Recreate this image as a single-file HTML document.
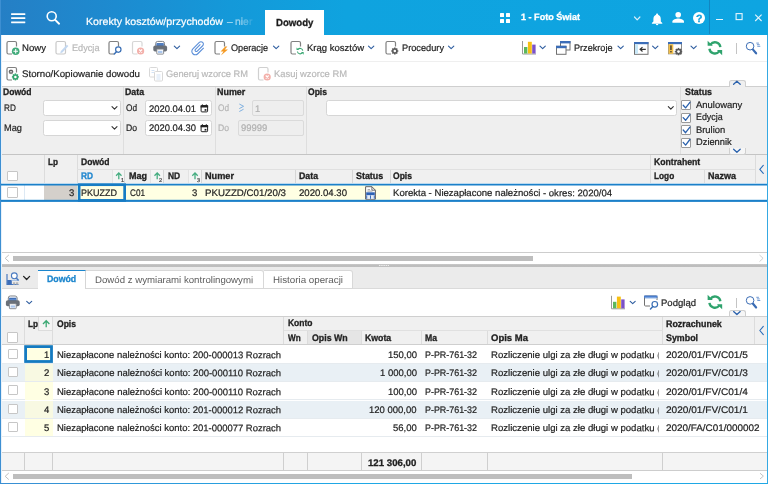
<!DOCTYPE html>
<html lang="pl">
<head>
<meta charset="utf-8">
<title>Dowody</title>
<style>
*{box-sizing:border-box;margin:0;padding:0}
html,body{width:768px;height:484px;overflow:hidden;background:#fff}
body{position:relative;font-family:"Liberation Sans",sans-serif;font-size:9.5px;line-height:12px;color:#222}
.a{position:absolute;white-space:nowrap;transform-origin:0 50%;-webkit-text-stroke:.2px}
.b{font-weight:bold;-webkit-text-stroke:.3px}
.box{position:absolute}
#root{position:absolute;left:0;top:0;width:768px;height:484px;will-change:transform}
#ov{position:absolute;left:0;top:0;width:768px;height:484px;pointer-events:none}
</style>
</head>
<body>
<div id="root">
<div class="box" style="left:0px;top:0px;width:768px;height:35px;background:linear-gradient(90deg,#257fc5 0%,#1d8bd0 15%,#1499d9 30%,#0fa3df 45%,#0ea5e1 100%);"></div>
<div class="a" style="top:15.83px;left:86.00px;font-size:10.3px;transform:rotate(.05deg) scaleX(1.032);color:#fff;">Korekty kosztów/przychodów</div>
<div class="a" style="top:15.83px;left:227.00px;font-size:10.3px;transform:rotate(.05deg) scaleX(1.000);color:rgba(255,255,255,.6);">–</div>
<div class="a" style="top:15.83px;left:235.00px;font-size:10.3px;transform:rotate(.05deg) scaleX(1.000);color:rgba(255,255,255,.5);">ni</div>
<div class="a" style="top:15.83px;left:242.80px;font-size:10.3px;transform:rotate(.05deg) scaleX(1.000);color:rgba(255,255,255,.3);">e</div>
<div class="a" style="top:15.83px;left:248.60px;font-size:10.3px;transform:rotate(.05deg) scaleX(1.000);color:rgba(255,255,255,.15);">r</div>
<div class="box" style="left:265px;top:10.3px;width:58.8px;height:25px;background:#fff;"></div>
<div class="a b" style="top:16.67px;left:276.20px;font-size:10.2px;transform:rotate(.05deg) scaleX(0.943);color:#1c1c1c;">Dowody</div>
<div class="box" style="left:500px;top:13.3px;width:4px;height:3.6px;background:#fff;border-radius:.5px"></div>
<div class="box" style="left:505.7px;top:13.3px;width:4px;height:3.6px;background:#fff;border-radius:.5px"></div>
<div class="box" style="left:500px;top:19px;width:4px;height:3.6px;background:#fff;border-radius:.5px"></div>
<div class="box" style="left:505.7px;top:19px;width:4px;height:3.6px;background:#fff;border-radius:.5px"></div>
<div class="a b" style="top:10.91px;left:521.00px;font-size:9.2px;transform:rotate(.05deg) scaleX(0.987);color:#fff;">1 - Foto Świat</div>
<div class="box" style="left:692.6px;top:11.7px;width:12px;height:12px;background:#fff;border-radius:50%"></div>
<div class="a b" style="top:11.76px;left:695.90px;font-size:10.5px;transform:rotate(.05deg) scaleX(1.000);color:#11a0dd;">?</div>
<div class="box" style="left:709px;top:0px;width:1px;height:34px;background:rgba(20,110,170,.55);"></div>
<div class="box" style="left:715.8px;top:18.8px;width:6.8px;height:1.2px;background:#e6f4fc;"></div>
<div class="box" style="left:2px;top:61px;width:766px;height:1px;background:#efefef;"></div>
<div class="a" style="top:41.51px;left:22.00px;transform:rotate(.05deg) scaleX(1.010);">Nowy</div>
<div class="a" style="top:41.51px;left:71.50px;transform:rotate(.05deg) scaleX(0.964);color:#b9b9b9;">Edycja</div>
<div class="a" style="top:41.51px;left:231.00px;transform:rotate(.05deg) scaleX(0.960);">Operacje</div>
<div class="a" style="top:41.51px;left:306.50px;transform:rotate(.05deg) scaleX(1.000);">Krąg kosztów</div>
<div class="a" style="top:41.51px;left:402.00px;transform:rotate(.05deg) scaleX(0.970);">Procedury</div>
<div class="a" style="top:41.51px;left:573.50px;transform:rotate(.05deg) scaleX(0.960);">Przekroje</div>
<div class="box" style="left:736px;top:43px;width:1px;height:10.5px;background:#c4c4c4;"></div>
<div class="a" style="top:68.21px;left:22.00px;transform:rotate(.05deg) scaleX(1.020);">Storno/Kopiowanie dowodu</div>
<div class="a" style="top:68.21px;left:166.00px;transform:rotate(.05deg) scaleX(0.977);color:#b9b9b9;">Generuj wzorce RM</div>
<div class="a" style="top:68.21px;left:274.00px;transform:rotate(.05deg) scaleX(0.988);color:#b9b9b9;">Kasuj wzorce RM</div>
<div class="box" style="left:2px;top:86px;width:766px;height:69px;background:#efefef;border-top:1px solid #cfcfcf;border-bottom:1px solid #c4c4c4"></div>
<div class="box" style="left:728.5px;top:79.8px;width:17px;height:7px;background:#efefef;border:1px solid #cfcfcf;border-bottom:none;border-radius:2.5px 2.5px 0 0"></div>
<div class="box" style="left:122.5px;top:87px;width:1px;height:67px;background:#dedede;"></div>
<div class="box" style="left:214.5px;top:87px;width:1px;height:67px;background:#dedede;"></div>
<div class="box" style="left:306px;top:87px;width:1px;height:67px;background:#dedede;"></div>
<div class="box" style="left:679.5px;top:87px;width:1px;height:67px;background:#dedede;"></div>
<div class="a b" style="top:86.21px;left:2.50px;transform:rotate(.05deg) scaleX(0.900);">Dowód</div>
<div class="a b" style="top:86.21px;left:124.50px;transform:rotate(.05deg) scaleX(0.923);">Data</div>
<div class="a b" style="top:86.21px;left:216.50px;transform:rotate(.05deg) scaleX(0.940);">Numer</div>
<div class="a b" style="top:86.21px;left:308.00px;transform:rotate(.05deg) scaleX(0.900);">Opis</div>
<div class="a b" style="top:86.21px;left:684.60px;transform:rotate(.05deg) scaleX(0.930);">Status</div>
<div class="a" style="top:102.41px;left:4.00px;transform:rotate(.05deg) scaleX(0.860);">RD</div>
<div class="a" style="top:122.21px;left:4.00px;transform:rotate(.05deg) scaleX(0.974);">Mag</div>
<div class="box" style="left:43px;top:100px;width:78px;height:15.5px;background:#fff;border:1px solid #d6d6d6;border-radius:2.5px"></div>
<div class="box" style="left:43px;top:120px;width:78px;height:15.5px;background:#fff;border:1px solid #d6d6d6;border-radius:2.5px"></div>
<div class="a" style="top:101.91px;left:126.00px;transform:rotate(.05deg) scaleX(0.868);">Od</div>
<div class="a" style="top:121.91px;left:126.00px;transform:rotate(.05deg) scaleX(0.906);">Do</div>
<div class="box" style="left:145px;top:100px;width:67px;height:15.5px;background:#fff;border:1px solid #d6d6d6;border-radius:2.5px"></div>
<div class="box" style="left:145px;top:120px;width:67px;height:15.5px;background:#fff;border:1px solid #d6d6d6;border-radius:2.5px"></div>
<div class="a" style="top:102.71px;left:148.80px;transform:rotate(.05deg) scaleX(0.989);">2020.04.01</div>
<div class="a" style="top:122.01px;left:148.80px;transform:rotate(.05deg) scaleX(0.989);">2020.04.30</div>
<div class="a" style="top:101.91px;left:218.00px;transform:rotate(.05deg) scaleX(0.868);color:#b5b5b5;">Od</div>
<div class="a" style="top:121.91px;left:218.00px;transform:rotate(.05deg) scaleX(0.906);color:#b5b5b5;">Do</div>
<div class="box" style="left:251.5px;top:100px;width:52px;height:15.5px;background:#eeeeee;border:1px solid #dadada;border-radius:2px"></div>
<div class="box" style="left:237.5px;top:120px;width:66px;height:15.5px;background:#eeeeee;border:1px solid #dadada;border-radius:2px"></div>
<div class="a" style="top:102.71px;left:255.00px;transform:rotate(.05deg) scaleX(1.000);color:#b0b0b0;">1</div>
<div class="a" style="top:122.01px;left:240.50px;transform:rotate(.05deg) scaleX(0.996);color:#b0b0b0;">99999</div>
<div class="box" style="left:325.5px;top:100px;width:351px;height:15.5px;background:#fff;border:1px solid #d6d6d6;border-radius:2.5px"></div>
<div class="box" style="left:681.4px;top:100.4px;width:10px;height:10px;background:#fff;border:1px solid #9a9a9a;border-radius:1px"></div>
<div class="a" style="top:98.91px;left:695.80px;transform:rotate(.05deg) scaleX(0.994);">Anulowany</div>
<div class="box" style="left:681.4px;top:112.80000000000001px;width:10px;height:10px;background:#fff;border:1px solid #9a9a9a;border-radius:1px"></div>
<div class="a" style="top:111.36px;left:695.80px;transform:rotate(.05deg) scaleX(0.936);">Edycja</div>
<div class="box" style="left:681.4px;top:125.2px;width:10px;height:10px;background:#fff;border:1px solid #9a9a9a;border-radius:1px"></div>
<div class="a" style="top:123.81px;left:695.80px;transform:rotate(.05deg) scaleX(0.987);">Brulion</div>
<div class="box" style="left:681.4px;top:137.6px;width:10px;height:10px;background:#fff;border:1px solid #9a9a9a;border-radius:1px"></div>
<div class="a" style="top:136.26px;left:695.80px;transform:rotate(.05deg) scaleX(0.980);">Dziennik</div>
<div class="box" style="left:728.5px;top:147.5px;width:17px;height:7px;background:#f6f6f6;border:1px solid #cfcfcf;border-top:none;border-radius:0 0 2.5px 2.5px"></div>
<div class="box" style="left:2px;top:155px;width:766px;height:28px;background:#f0f0f0;"></div>
<div class="box" style="left:2px;top:182.5px;width:766px;height:1px;background:#cfcfcf;"></div>
<div class="box" style="left:43.5px;top:155px;width:1px;height:28px;background:#dcdcdc;"></div>
<div class="box" style="left:77px;top:155px;width:1px;height:28px;background:#dcdcdc;"></div>
<div class="box" style="left:649.5px;top:155px;width:1px;height:28px;background:#dcdcdc;"></div>
<div class="box" style="left:754.5px;top:155px;width:1px;height:28px;background:#dcdcdc;"></div>
<div class="box" style="left:111.5px;top:170px;width:13px;height:13px;background:#f4f4f4;border-left:1px solid #e3e3e3"></div>
<div class="box" style="left:150px;top:170px;width:13px;height:13px;background:#f4f4f4;border-left:1px solid #e3e3e3"></div>
<div class="box" style="left:187.5px;top:170px;width:13.5px;height:13px;background:#f4f4f4;border-left:1px solid #e3e3e3"></div>
<div class="box" style="left:124.3px;top:170px;width:1px;height:13px;background:#d6d6d6;"></div>
<div class="box" style="left:163px;top:170px;width:1px;height:13px;background:#d6d6d6;"></div>
<div class="box" style="left:201px;top:170px;width:1px;height:13px;background:#d6d6d6;"></div>
<div class="box" style="left:295px;top:170px;width:1px;height:13px;background:#d6d6d6;"></div>
<div class="box" style="left:352px;top:170px;width:1px;height:13px;background:#d6d6d6;"></div>
<div class="box" style="left:389.5px;top:170px;width:1px;height:13px;background:#d6d6d6;"></div>
<div class="box" style="left:704px;top:170px;width:1px;height:13px;background:#dcdcdc;"></div>
<div class="box" style="left:77px;top:169px;width:572.5px;height:1px;background:#e0e0e0;"></div>
<div class="box" style="left:649.5px;top:169px;width:105.0px;height:1px;background:#e0e0e0;"></div>
<div class="a b" style="top:155.71px;left:48.00px;transform:rotate(.05deg) scaleX(0.860);">Lp</div>
<div class="a b" style="top:155.71px;left:81.00px;transform:rotate(.05deg) scaleX(0.900);">Dowód</div>
<div class="a b" style="top:155.71px;left:653.80px;transform:rotate(.05deg) scaleX(0.912);">Kontrahent</div>
<div class="a b" style="top:169.81px;left:81.00px;transform:rotate(.05deg) scaleX(0.875);color:#1f86cf;">RD</div>
<div class="a b" style="top:169.81px;left:129.00px;transform:rotate(.05deg) scaleX(0.947);">Mag</div>
<div class="a b" style="top:169.81px;left:167.80px;transform:rotate(.05deg) scaleX(0.889);">ND</div>
<div class="a b" style="top:169.81px;left:205.00px;transform:rotate(.05deg) scaleX(0.964);">Numer</div>
<div class="a b" style="top:169.81px;left:299.00px;transform:rotate(.05deg) scaleX(0.923);">Data</div>
<div class="a b" style="top:169.81px;left:355.80px;transform:rotate(.05deg) scaleX(0.937);">Status</div>
<div class="a b" style="top:169.81px;left:393.00px;transform:rotate(.05deg) scaleX(0.900);">Opis</div>
<div class="a b" style="top:169.81px;left:653.80px;transform:rotate(.05deg) scaleX(0.870);">Logo</div>
<div class="a b" style="top:169.81px;left:708.00px;transform:rotate(.05deg) scaleX(0.947);">Nazwa</div>
<div class="a" style="top:173.59px;left:120.80px;font-size:5.5px;transform:rotate(.05deg) scaleX(1.000);color:#444;">1</div>
<div class="a" style="top:173.59px;left:159.20px;font-size:5.5px;transform:rotate(.05deg) scaleX(1.000);color:#444;">2</div>
<div class="a" style="top:173.59px;left:197.00px;font-size:5.5px;transform:rotate(.05deg) scaleX(1.000);color:#444;">3</div>
<div class="box" style="left:7.2px;top:170.5px;width:10.4px;height:10.4px;background:#fff;border:1px solid #c6c6c6;border-radius:1px"></div>
<div class="box" style="left:2px;top:183px;width:766px;height:18px;background:#fff;"></div>
<div class="box" style="left:44px;top:185px;width:33px;height:15px;background:#d4d0cb;"></div>
<div class="box" style="left:77px;top:185px;width:312.5px;height:15px;background:#ffffe3;"></div>
<div class="box" style="left:24px;top:185px;width:1px;height:15px;background:#dde9f4;"></div>
<div class="box" style="left:7.3px;top:187.2px;width:10.4px;height:10.4px;background:#fff;border:1px solid #c6c6c6;border-radius:1px"></div>
<div class="a" style="top:186.51px;right:694.00px;transform-origin:100% 50%;transform:rotate(.05deg) scaleX(1.000);">3</div>
<div class="a" style="top:186.51px;left:81.00px;transform:rotate(.05deg) scaleX(0.947);">PKUZZD</div>
<div class="a" style="top:186.51px;left:130.00px;transform:rotate(.05deg) scaleX(0.861);">C01</div>
<div class="a" style="top:186.51px;right:570.50px;transform-origin:100% 50%;transform:rotate(.05deg) scaleX(1.000);">3</div>
<div class="a" style="top:186.51px;left:205.00px;transform:rotate(.05deg) scaleX(1.023);">PKUZZD/C01/20/3</div>
<div class="a" style="top:186.51px;left:299.00px;transform:rotate(.05deg) scaleX(1.010);">2020.04.30</div>
<div class="a" style="top:186.51px;left:393.00px;transform:rotate(.05deg) scaleX(1.007);">Korekta - Niezapłacone należności - okres: 2020/04</div>
<div class="box" style="left:2px;top:252px;width:766px;height:1px;background:#cdcdcd;"></div>
<div class="box" style="left:13px;top:256px;width:519.5px;height:5px;background:#bebebe;"></div>
<div class="box" style="left:2px;top:264px;width:766px;height:3px;background:linear-gradient(180deg,#c9c9c9,#b9b9b9 70%,#c4c4c4);"></div>
<div class="box" style="left:2px;top:267px;width:766px;height:22px;background:#ebebeb;border-bottom:1px solid #dadada"></div>
<div class="box" style="left:37.5px;top:269.5px;width:48.5px;height:19.5px;background:#fff;border-top:1.800px solid #1c86cd;border-right:1px solid #d6d6d6"></div>
<div class="a b" style="top:272.81px;left:46.80px;transform:rotate(.05deg) scaleX(0.922);color:#1c86cd;">Dowód</div>
<div class="box" style="left:86px;top:270px;width:178px;height:19px;background:#fff;border:1px solid #d8d8d8;border-left:none;border-radius:0 3px 0 0"></div>
<div class="box" style="left:264px;top:270px;width:89px;height:19px;background:#fff;border:1px solid #d8d8d8;border-left:none;border-radius:0 3px 0 0"></div>
<div class="a" style="top:273.61px;left:95.00px;transform:rotate(.05deg) scaleX(1.015);color:#5c5c5c;-webkit-text-stroke:0;">Dowód z wymiarami kontrolingowymi</div>
<div class="a" style="top:273.61px;left:273.30px;transform:rotate(.05deg) scaleX(1.028);color:#5c5c5c;-webkit-text-stroke:0;">Historia operacji</div>
<div class="a" style="top:296.71px;left:661.30px;transform:rotate(.05deg) scaleX(1.004);">Podgląd</div>
<div class="box" style="left:736px;top:298px;width:1px;height:9.5px;background:#c4c4c4;"></div>
<div class="box" style="left:728.5px;top:309.7px;width:17px;height:7px;background:#f6f6f6;border:1px solid #cfcfcf;border-bottom:none;border-radius:2.5px 2.5px 0 0"></div>
<div class="box" style="left:2px;top:316px;width:766px;height:28.5px;background:#f0f0f0;border-top:1px solid #cfcfcf;border-bottom:1px solid #cfcfcf"></div>
<div class="box" style="left:307.5px;top:331px;width:54px;height:13px;background:#e5e5e5;"></div>
<div class="box" style="left:23.5px;top:317px;width:1px;height:27px;background:#dcdcdc;"></div>
<div class="box" style="left:52px;top:317px;width:1px;height:27px;background:#dcdcdc;"></div>
<div class="box" style="left:283px;top:317px;width:1px;height:27px;background:#dcdcdc;"></div>
<div class="box" style="left:662px;top:317px;width:1px;height:27px;background:#dcdcdc;"></div>
<div class="box" style="left:754px;top:317px;width:1px;height:27px;background:#dcdcdc;"></div>
<div class="box" style="left:306.5px;top:331px;width:1px;height:13px;background:#dcdcdc;"></div>
<div class="box" style="left:361px;top:331px;width:1px;height:13px;background:#dcdcdc;"></div>
<div class="box" style="left:420.5px;top:331px;width:1px;height:13px;background:#dcdcdc;"></div>
<div class="box" style="left:486.5px;top:331px;width:1px;height:13px;background:#dcdcdc;"></div>
<div class="box" style="left:283.5px;top:330.3px;width:379.0px;height:1px;background:#e0e0e0;"></div>
<div class="box" style="left:38px;top:317px;width:14.5px;height:13.5px;background:#f4f4f4;border:1px solid #dcdcdc;border-top:none"></div>
<div class="a b" style="top:317.71px;left:28.00px;transform:rotate(.05deg) scaleX(0.862);">Lp</div>
<div class="a b" style="top:317.71px;left:57.00px;transform:rotate(.05deg) scaleX(0.900);">Opis</div>
<div class="a b" style="top:317.21px;left:287.50px;transform:rotate(.05deg) scaleX(0.893);">Konto</div>
<div class="a b" style="top:317.51px;left:666.00px;transform:rotate(.05deg) scaleX(0.935);">Rozrachunek</div>
<div class="a b" style="top:331.71px;left:287.50px;transform:rotate(.05deg) scaleX(0.860);">Wn</div>
<div class="a b" style="top:331.71px;left:311.80px;transform:rotate(.05deg) scaleX(0.927);">Opis Wn</div>
<div class="a b" style="top:331.71px;left:365.30px;transform:rotate(.05deg) scaleX(0.919);">Kwota</div>
<div class="a b" style="top:331.71px;left:425.00px;transform:rotate(.05deg) scaleX(0.909);">Ma</div>
<div class="a b" style="top:331.71px;left:491.00px;transform:rotate(.05deg) scaleX(1.001);">Opis Ma</div>
<div class="a b" style="top:331.71px;left:666.00px;transform:rotate(.05deg) scaleX(0.933);">Symbol</div>
<div class="box" style="left:7.2px;top:332.2px;width:10.4px;height:10.4px;background:#fff;border:1px solid #c6c6c6;border-radius:1px"></div>
<div class="box" style="left:2px;top:345.3px;width:766px;height:18.4px;background:#fff;border-bottom:1px solid #e6ebef"></div>
<div class="box" style="left:24.5px;top:345.3px;width:28px;height:17.599999999999998px;background:#ffffe3;"></div>
<div class="box" style="left:7.7px;top:348.5px;width:10.2px;height:10.2px;background:#fff;border:1px solid #c6c6c6;border-radius:1px"></div>
<div class="a" style="top:348.81px;right:719.00px;transform-origin:100% 50%;transform:rotate(.05deg) scaleX(1.000);">1</div>
<div class="a" style="top:348.81px;left:57.00px;transform:rotate(.05deg) scaleX(0.996);width:227.0px;overflow:hidden;">Niezapłacone należności konto: 200-000013 Rozrach</div>
<div class="a" style="top:348.81px;right:351.20px;transform-origin:100% 50%;transform:rotate(.05deg) scaleX(1.000);">150,00</div>
<div class="a" style="top:348.81px;left:425.00px;transform:rotate(.05deg) scaleX(0.938);">P-PR-761-32</div>
<div class="a" style="top:348.81px;left:491.00px;transform:rotate(.05deg) scaleX(1.009);width:166.4px;overflow:hidden;">Rozliczenie ulgi za złe długi w podatku (</div>
<div class="a" style="top:348.81px;left:665.50px;transform:rotate(.05deg) scaleX(1.061);">2020/01/FV/C01/5</div>
<div class="box" style="left:2px;top:363.7px;width:766px;height:18.4px;background:#e9f0f5;border-bottom:1px solid #e6ebef"></div>
<div class="box" style="left:24.5px;top:363.7px;width:28px;height:17.599999999999998px;background:#f8f9e2;"></div>
<div class="box" style="left:7.7px;top:366.9px;width:10.2px;height:10.2px;background:#fff;border:1px solid #c6c6c6;border-radius:1px"></div>
<div class="a" style="top:367.21px;right:719.00px;transform-origin:100% 50%;transform:rotate(.05deg) scaleX(1.000);">2</div>
<div class="a" style="top:367.21px;left:57.00px;transform:rotate(.05deg) scaleX(0.999);width:226.3px;overflow:hidden;">Niezapłacone należności konto: 200-000110 Rozrach</div>
<div class="a" style="top:367.21px;right:351.20px;transform-origin:100% 50%;transform:rotate(.05deg) scaleX(1.000);">1 000,00</div>
<div class="a" style="top:367.21px;left:425.00px;transform:rotate(.05deg) scaleX(0.938);">P-PR-761-32</div>
<div class="a" style="top:367.21px;left:491.00px;transform:rotate(.05deg) scaleX(1.009);width:166.4px;overflow:hidden;">Rozliczenie ulgi za złe długi w podatku (</div>
<div class="a" style="top:367.21px;left:665.50px;transform:rotate(.05deg) scaleX(1.061);">2020/01/FV/C01/3</div>
<div class="box" style="left:2px;top:382.1px;width:766px;height:18.4px;background:#fff;border-bottom:1px solid #e6ebef"></div>
<div class="box" style="left:24.5px;top:382.1px;width:28px;height:17.599999999999998px;background:#ffffe3;"></div>
<div class="box" style="left:7.7px;top:385.3px;width:10.2px;height:10.2px;background:#fff;border:1px solid #c6c6c6;border-radius:1px"></div>
<div class="a" style="top:385.61px;right:719.00px;transform-origin:100% 50%;transform:rotate(.05deg) scaleX(1.000);">3</div>
<div class="a" style="top:385.61px;left:57.00px;transform:rotate(.05deg) scaleX(0.999);width:226.3px;overflow:hidden;">Niezapłacone należności konto: 200-000110 Rozrach</div>
<div class="a" style="top:385.61px;right:351.20px;transform-origin:100% 50%;transform:rotate(.05deg) scaleX(1.000);">100,00</div>
<div class="a" style="top:385.61px;left:425.00px;transform:rotate(.05deg) scaleX(0.938);">P-PR-761-32</div>
<div class="a" style="top:385.61px;left:491.00px;transform:rotate(.05deg) scaleX(1.009);width:166.4px;overflow:hidden;">Rozliczenie ulgi za złe długi w podatku (</div>
<div class="a" style="top:385.61px;left:665.50px;transform:rotate(.05deg) scaleX(1.061);">2020/01/FV/C01/4</div>
<div class="box" style="left:2px;top:400.5px;width:766px;height:18.4px;background:#e9f0f5;border-bottom:1px solid #e6ebef"></div>
<div class="box" style="left:24.5px;top:400.5px;width:28px;height:17.599999999999998px;background:#f8f9e2;"></div>
<div class="box" style="left:7.7px;top:403.7px;width:10.2px;height:10.2px;background:#fff;border:1px solid #c6c6c6;border-radius:1px"></div>
<div class="a" style="top:404.01px;right:719.00px;transform-origin:100% 50%;transform:rotate(.05deg) scaleX(1.000);">4</div>
<div class="a" style="top:404.01px;left:57.00px;transform:rotate(.05deg) scaleX(0.996);width:227.0px;overflow:hidden;">Niezapłacone należności konto: 201-000012 Rozrach</div>
<div class="a" style="top:404.01px;right:351.20px;transform-origin:100% 50%;transform:rotate(.05deg) scaleX(1.000);">120 000,00</div>
<div class="a" style="top:404.01px;left:425.00px;transform:rotate(.05deg) scaleX(0.938);">P-PR-761-32</div>
<div class="a" style="top:404.01px;left:491.00px;transform:rotate(.05deg) scaleX(1.009);width:166.4px;overflow:hidden;">Rozliczenie ulgi za złe długi w podatku (</div>
<div class="a" style="top:404.01px;left:665.50px;transform:rotate(.05deg) scaleX(1.061);">2020/01/FV/C01/1</div>
<div class="box" style="left:2px;top:418.9px;width:766px;height:18.4px;background:#fff;border-bottom:1px solid #e6ebef"></div>
<div class="box" style="left:24.5px;top:418.9px;width:28px;height:17.599999999999998px;background:#ffffe3;"></div>
<div class="box" style="left:7.7px;top:422.1px;width:10.2px;height:10.2px;background:#fff;border:1px solid #c6c6c6;border-radius:1px"></div>
<div class="a" style="top:422.41px;right:719.00px;transform-origin:100% 50%;transform:rotate(.05deg) scaleX(1.000);">5</div>
<div class="a" style="top:422.41px;left:57.00px;transform:rotate(.05deg) scaleX(0.996);width:227.0px;overflow:hidden;">Niezapłacone należności konto: 201-000077 Rozrach</div>
<div class="a" style="top:422.41px;right:351.20px;transform-origin:100% 50%;transform:rotate(.05deg) scaleX(1.000);">56,00</div>
<div class="a" style="top:422.41px;left:425.00px;transform:rotate(.05deg) scaleX(0.938);">P-PR-761-32</div>
<div class="a" style="top:422.41px;left:491.00px;transform:rotate(.05deg) scaleX(1.009);width:166.4px;overflow:hidden;">Rozliczenie ulgi za złe długi w podatku (</div>
<div class="a" style="top:422.41px;left:665.50px;transform:rotate(.05deg) scaleX(1.041);">2020/FA/C01/000002</div>
<div class="box" style="left:2px;top:452px;width:766px;height:19px;background:#f4f4f4;border-top:1px solid #d0d0d0;border-bottom:1px solid #cdcdcd"></div>
<div class="box" style="left:23.5px;top:453px;width:1px;height:17px;background:#cfcfcf;"></div>
<div class="box" style="left:52px;top:453px;width:1px;height:17px;background:#cfcfcf;"></div>
<div class="box" style="left:283px;top:453px;width:1px;height:17px;background:#cfcfcf;"></div>
<div class="box" style="left:307px;top:453px;width:1px;height:17px;background:#cfcfcf;"></div>
<div class="box" style="left:361px;top:453px;width:1px;height:17px;background:#cfcfcf;"></div>
<div class="box" style="left:420.5px;top:453px;width:1px;height:17px;background:#cfcfcf;"></div>
<div class="box" style="left:486.5px;top:453px;width:1px;height:17px;background:#cfcfcf;"></div>
<div class="box" style="left:662px;top:453px;width:1px;height:17px;background:#cfcfcf;"></div>
<div class="a b" style="top:456.51px;left:367.50px;transform:rotate(.05deg) scaleX(1.016);">121 306,00</div>
<div class="box" style="left:13px;top:474px;width:619px;height:5.4px;background:#bebebe;"></div>
<div class="box" style="left:0px;top:0px;width:1px;height:484px;background:#3d8fd2;"></div>
<div class="box" style="left:1px;top:35px;width:1px;height:449px;background:rgba(61,143,210,.12);"></div>
<div class="box" style="left:767px;top:35px;width:1px;height:449px;background:#35a9e3;"></div>
<div class="box" style="left:0px;top:482.6px;width:768px;height:1.4px;background:linear-gradient(90deg,#3a8fd3,#1fa8e5 45%);"></div>
<svg id="ov" width="768" height="484" viewBox="0 0 768 484">
<rect x="11.1" y="13.2" width="14.2" height="1.750" rx=".3" fill="#fff"/>
<rect x="11.1" y="17.3" width="14.2" height="1.750" rx=".3" fill="#fff"/>
<rect x="11.1" y="21.4" width="14.2" height="1.750" rx=".3" fill="#fff"/>
<g fill="none" stroke="#fff"><circle cx="51.7" cy="16.3" r="4.500" stroke-width="1.600"/><path d="M55.200,19.900 L59.100,23.700" stroke-width="1.900" stroke-linecap="round"/></g>
<path d="M634.5,17 l2.7,2.8 l2.7,-2.8" fill="none" stroke="#d8eefa" stroke-width="1.2" stroke-linecap="round" stroke-linejoin="round"/>
<g fill="#fff"><path d="M657.1,13.4 c0.6,0 1,0.4 1,1 v0.4 c1.7,0.6 2.7,2.2 2.7,4.2 v2.6 l1.5,1.5 v0.6 h-10.4 v-0.6 l1.5,-1.5 v-2.6 c0,-2 1,-3.600 2.7,-4.2 v-0.4 c0,-0.6 0.4,-1 1,-1 z"/><path d="M655.9,24.1 h2.4 a1.2,1.2 0 0 1 -2.4,0 z"/></g>
<g fill="#fff"><circle cx="678.2" cy="14.7" r="2.8"/><path d="M672.4,22.8 v-1.4 c0,-2 3.8,-3 5.800,-3 s5.800,1 5.800,3 v1.400 z"/></g>
<rect x="736.1" y="13.600" width="6" height="6" fill="none" stroke="#e6f4fc" stroke-width="1.1"/>
<path d="M755.200,14.6 l6.4,6.4 m0,-6.4 l-6.4,6.4" stroke="#e6f4fc" stroke-width="1.1" fill="none"/>
<path d="M12.00,54 H8.5 a1.5,1.5 0 0 1 -1.5,-1.5 V43.0 a1.5,1.5 0 0 1 1.5,-1.5 H15.0 a1.5,1.5 0 0 1 1.5,1.5 V46.50" fill="none" stroke="#808080" stroke-width="1.2" opacity="1"/>
<circle cx="15.7" cy="51.2" r="3.800" fill="#42ab7b"/><path d="M13.400,51.2 h4.600 M15.7,48.900 v4.600" stroke="#fff" stroke-width="1.1"/>
<path d="M57.5,54 a1.5,1.5 0 0 1 -1.5,-1.5 V43.0 a1.5,1.5 0 0 1 1.5,-1.5 H64.0 a1.5,1.5 0 0 1 1.5,1.5 V52.5 a1.5,1.5 0 0 1 -1.5,1.5 Z" fill="none" stroke="#c9c9c9" stroke-width="1.2" opacity="1"/>
<path d="M60.200,53.300 l0.700,-2.300 l6,-6.300 l1.500,1.400 l-6,6.300 z" fill="#c3d8f1"/>
<path d="M114.00,54 H110.5 a1.5,1.5 0 0 1 -1.5,-1.5 V43.0 a1.5,1.5 0 0 1 1.5,-1.5 H117.0 a1.5,1.5 0 0 1 1.5,1.5 V46.50" fill="none" stroke="#808080" stroke-width="1.2" opacity="1"/>
<g fill="none" stroke="#3a6fb5"><circle cx="118.300" cy="49.6" r="2.700" stroke-width="1.2" fill="#fff"/><path d="M116.4,51.800 L114.300,54" stroke-width="1.5" stroke-linecap="round"/></g>
<path d="M137.50,54 H134.0 a1.5,1.5 0 0 1 -1.5,-1.5 V43.0 a1.5,1.5 0 0 1 1.5,-1.5 H140.5 a1.5,1.5 0 0 1 1.5,1.5 V46.50" fill="none" stroke="#d6d6d6" stroke-width="1.2" opacity="1"/>
<circle cx="140.6" cy="51" r="3.6" fill="#f3b0aa"/><path d="M139.100,49.500 l3,3 m0,-3 l-3,3" stroke="#fff" stroke-width="1.1"/>
<g transform="translate(153,40.8)"><rect x="2.700" y="0.600" width="8.800" height="6" rx="2" fill="#fff" stroke="#7b8088" stroke-width="1"/><rect x="3.500" y="2.300" width="7.200" height="3.700" fill="#3f6fb7"/><rect x="3.500" y="3.600" width="7.200" height="0.900" fill="#5d8bd0"/><rect x="0.300" y="4.800" width="13.800" height="6" rx="1.800" fill="#6a7078"/><rect x="3.800" y="8.300" width="6.800" height="5" rx="0.600" fill="#fff" stroke="#7b8088" stroke-width="0.900"/><rect x="5" y="10" width="4.400" height="2.200" fill="#a9c6ee"/></g>
<path d="M174.3,46.2 l2.65,2.5 l2.65,-2.5" fill="none" stroke="#2f5ea0" stroke-width="1.15" stroke-linecap="round" stroke-linejoin="round"/>
<path transform="translate(197.9,48.2) rotate(45) scale(.73) translate(-12,-12)" fill="#5a8ed8" d="M16.5 6v11.5c0 2.210-1.790 4-4 4s-4-1.790-4-4V5c0-1.380 1.120-2.500 2.500-2.500s2.500 1.120 2.500 2.500v10.500c0 .55-.45 1-1 1s-1-.45-1-1V6H10v9.500c0 1.380 1.120 2.500 2.500 2.500s2.500-1.120 2.500-2.500V5c0-2.210-1.790-4-4-4S7 2.790 7 5v12.500c0 3.040 2.460 5.500 5.500 5.500s5.500-2.460 5.500-5.500V6h-1.500z"/>
<path d="M220.00,54 H216.5 a1.5,1.5 0 0 1 -1.5,-1.5 V43.0 a1.5,1.5 0 0 1 1.5,-1.5 H223.0 a1.5,1.5 0 0 1 1.5,1.5 V46.50" fill="none" stroke="#808080" stroke-width="1.2" opacity="1"/>
<path d="M225.300,46.400 l-4.700,5 h2.900 l-2.600,4.100 l7.100,-6.100 h-3.200 l2.600,-3 z" fill="#f59a23"/>
<path d="M273.5,46.2 l2.65,2.5 l2.65,-2.5" fill="none" stroke="#2f5ea0" stroke-width="1.15" stroke-linecap="round" stroke-linejoin="round"/>
<path d="M296.00,54 H292.5 a1.5,1.5 0 0 1 -1.5,-1.5 V43.0 a1.5,1.5 0 0 1 1.5,-1.5 H299.0 a1.5,1.5 0 0 1 1.5,1.5 V46.50" fill="none" stroke="#808080" stroke-width="1.2" opacity="1"/>
<g transform="translate(300.1,51.1) scale(0.509)"><path d="M5.3,-0.8 A5.3,5.3 0 0 0 -4.3,-3.100 M-5.3,0.8 A5.3,5.3 0 0 0 4.3,3.100" fill="none" stroke="#3aa873" stroke-width="2.16"/><path d="M-7,-7 V-2 H-2 Z M7,7 V2 H2 Z" fill="#3aa873"/></g>
<path d="M368.5,46.2 l2.65,2.5 l2.65,-2.5" fill="none" stroke="#2f5ea0" stroke-width="1.15" stroke-linecap="round" stroke-linejoin="round"/>
<path d="M391.00,54 H387.5 a1.5,1.5 0 0 1 -1.5,-1.5 V43.0 a1.5,1.5 0 0 1 1.5,-1.5 H394.0 a1.5,1.5 0 0 1 1.5,1.5 V46.50" fill="none" stroke="#808080" stroke-width="1.2" opacity="1"/>
<g fill="#5a5a5a"><circle cx="394.8" cy="51" r="2.73"/>
<rect x="394.03" y="47.50" width="1.54" height="7.00" transform="rotate(0 394.8 51)"/>
<rect x="394.03" y="47.50" width="1.54" height="7.00" transform="rotate(45 394.8 51)"/>
<rect x="394.03" y="47.50" width="1.54" height="7.00" transform="rotate(90 394.8 51)"/>
<rect x="394.03" y="47.50" width="1.54" height="7.00" transform="rotate(135 394.8 51)"/>
<circle cx="394.8" cy="51" r="1.26" fill="#fff"/></g>
<path d="M448.5,46.2 l2.65,2.5 l2.65,-2.5" fill="none" stroke="#2f5ea0" stroke-width="1.15" stroke-linecap="round" stroke-linejoin="round"/>
<g transform="translate(522,41)"><path d="M0.5,0 V13 H14" fill="none" stroke="#9a9a9a" stroke-width="1"/><rect x="2" y="6" width="3.4" height="6.5" fill="#5cb85c"/><rect x="5.9" y="0.8" width="3.9" height="11.7" fill="#f7bf12"/><rect x="10.2" y="3.6" width="3.4" height="8.9" fill="#7b52c7"/></g>
<path d="M540,46.2 l2.65,2.5 l2.65,-2.5" fill="none" stroke="#2f5ea0" stroke-width="1.15" stroke-linecap="round" stroke-linejoin="round"/>
<g><rect x="560.5" y="41.500" width="9.5" height="8.5" fill="#fff" stroke="#707070"/><rect x="560" y="41" width="10.5" height="2.400" fill="#3b6db8"/><rect x="556.5" y="46.300" width="9.5" height="8" fill="#fff" stroke="#707070"/><rect x="556" y="45.800" width="10.500" height="2.400" fill="#3b6db8"/></g>
<path d="M618,46.2 l2.65,2.5 l2.65,-2.5" fill="none" stroke="#2f5ea0" stroke-width="1.15" stroke-linecap="round" stroke-linejoin="round"/>
<g><rect x="634.5" y="42.500" width="13.500" height="11.800" fill="#fff" stroke="#707070"/><rect x="634" y="42" width="14.500" height="2.200" fill="#3b6db8"/><rect x="635" y="44.200" width="3" height="9.600" fill="#c9e8f8"/><path d="M645.800,49.300 h-5.500 m2.200,-2.200 l-2.400,2.200 l2.400,2.200" fill="none" stroke="#333" stroke-width="1.2"/></g>
<path d="M652.6,46.2 l2.65,2.5 l2.65,-2.5" fill="none" stroke="#2f5ea0" stroke-width="1.15" stroke-linecap="round" stroke-linejoin="round"/>
<g><rect x="668.5" y="42.500" width="13.000" height="11.300" fill="#fff" stroke="#8a8a8a"/><rect x="668" y="42" width="14.000" height="2.200" fill="#3b6db8"/><rect x="668.500" y="44.200" width="4.800" height="9.600" fill="#f3c04a"/><rect x="670.300" y="45.400" width="1.300" height="4.600" fill="#333"/><rect x="670.300" y="51" width="1.300" height="1.400" fill="#333"/></g>
<g fill="#5a5a5a"><circle cx="678.5" cy="51.6" r="2.89"/>
<rect x="677.69" y="47.90" width="1.63" height="7.40" transform="rotate(0 678.5 51.6)"/>
<rect x="677.69" y="47.90" width="1.63" height="7.40" transform="rotate(45 678.5 51.6)"/>
<rect x="677.69" y="47.90" width="1.63" height="7.40" transform="rotate(90 678.5 51.6)"/>
<rect x="677.69" y="47.90" width="1.63" height="7.40" transform="rotate(135 678.5 51.6)"/>
<circle cx="678.5" cy="51.6" r="1.33" fill="#fff"/></g>
<path d="M691,46.2 l2.65,2.5 l2.65,-2.5" fill="none" stroke="#2f5ea0" stroke-width="1.15" stroke-linecap="round" stroke-linejoin="round"/>
<g transform="translate(714.9,47.9) scale(1.038)"><path d="M5.3,-0.8 A5.3,5.3 0 0 0 -4.3,-3.100 M-5.3,0.8 A5.3,5.3 0 0 0 4.3,3.100" fill="none" stroke="#2fa36d" stroke-width="2.22"/><path d="M-7,-7 V-2 H-2 Z M7,7 V2 H2 Z" fill="#2fa36d"/></g>
<g transform="translate(745.8,41.3)" fill="none" stroke="#3a6cb4"><circle cx="4.3" cy="4.9" r="3.800" stroke-width="1"/><path d="M7.200,8.300 L10.300,12" stroke-width="2.200" stroke-linecap="round"/><path d="M10.500,1.800 h2.600 M11.100,3.400 h2.800 M11.500,5 h3" stroke-width="0.9" stroke="#5f8ccc"/></g>
<path d="M12.00,80 H8.5 a1.5,1.5 0 0 1 -1.5,-1.5 V69.0 a1.5,1.5 0 0 1 1.5,-1.5 H15.0 a1.5,1.5 0 0 1 1.5,1.5 V72.50" fill="none" stroke="#808080" stroke-width="1.2" opacity="1"/>
<g fill="#5a5a5a"><circle cx="11" cy="71.8" r="1.79"/>
<rect x="10.49" y="69.50" width="1.01" height="4.60" transform="rotate(0 11 71.8)"/>
<rect x="10.49" y="69.50" width="1.01" height="4.60" transform="rotate(45 11 71.8)"/>
<rect x="10.49" y="69.50" width="1.01" height="4.60" transform="rotate(90 11 71.8)"/>
<rect x="10.49" y="69.50" width="1.01" height="4.60" transform="rotate(135 11 71.8)"/>
<circle cx="11" cy="71.8" r="0.83" fill="#fff"/></g>
<g fill="#35a56e"><circle cx="15.4" cy="76.9" r="2.73"/>
<rect x="14.63" y="73.40" width="1.54" height="7.00" transform="rotate(0 15.4 76.9)"/>
<rect x="14.63" y="73.40" width="1.54" height="7.00" transform="rotate(45 15.4 76.9)"/>
<rect x="14.63" y="73.40" width="1.54" height="7.00" transform="rotate(90 15.4 76.9)"/>
<rect x="14.63" y="73.40" width="1.54" height="7.00" transform="rotate(135 15.4 76.9)"/>
<circle cx="15.4" cy="76.9" r="1.26" fill="#fff"/></g>
<g opacity=".55"><rect x="149.500" y="67.500" width="8" height="9.500" rx="1" fill="#fff" stroke="#b8b8b8"/><path d="M151.500,70.500 h3 M151.500,72.500 h3" stroke="#9cc0ea" stroke-width=".8"/><rect x="154.500" y="71.500" width="8" height="9.500" rx="1" fill="#fff" stroke="#b8b8b8"/><path d="M156.500,75 h4 M156.500,77 h4 M156.500,79 h4" stroke="#9cc0ea" stroke-width=".8"/></g>
<path d="M263.50,80 H260.0 a1.5,1.5 0 0 1 -1.5,-1.5 V69.0 a1.5,1.5 0 0 1 1.5,-1.5 H266.5 a1.5,1.5 0 0 1 1.5,1.5 V72.50" fill="none" stroke="#d0d0d0" stroke-width="1.2" opacity="1"/>
<circle cx="267.200" cy="77" r="3.600" fill="#f3b0aa"/><path d="M265.700,75.500 l3,3 m0,-3 l-3,3" stroke="#fff" stroke-width="1.1"/>
<path d="M733.600,84.300 l3.300,-3 l3.300,3" fill="none" stroke="#2b62ad" stroke-width="1.3" stroke-linecap="round" stroke-linejoin="round"/>
<path d="M112,106.6 l2.5,2.6 l2.5,-2.6" fill="none" stroke="#333" stroke-width="1.1" stroke-linecap="round" stroke-linejoin="round"/>
<path d="M112,126.6 l2.5,2.6 l2.5,-2.6" fill="none" stroke="#333" stroke-width="1.1" stroke-linecap="round" stroke-linejoin="round"/>
<g transform="translate(200.6,104.4)"><rect x="0.500" y="1.300" width="6.500" height="6.200" rx=".8" fill="#fff" stroke="#222" stroke-width="1"/><rect x="0" y="0.800" width="7.500" height="2.300" fill="#222"/><rect x="1.300" y="0" width="1" height="1.500" fill="#222"/><rect x="5.200" y="0" width="1" height="1.500" fill="#222"/><rect x="4" y="4.700" width="1.800" height="1.700" fill="#222"/></g>
<g transform="translate(200.6,124.2)"><rect x="0.500" y="1.300" width="6.500" height="6.200" rx=".8" fill="#fff" stroke="#222" stroke-width="1"/><rect x="0" y="0.800" width="7.500" height="2.300" fill="#222"/><rect x="1.300" y="0" width="1" height="1.500" fill="#222"/><rect x="5.200" y="0" width="1" height="1.500" fill="#222"/><rect x="4" y="4.700" width="1.800" height="1.700" fill="#222"/></g>
<path d="M239.300,104 l4.300,2.300 l-4.300,2.300 M239.300,111.500 l4.300,-2.300" fill="none" stroke="#7fb0e0" stroke-width="1"/>
<path d="M668.3,106.6 l2.5,2.6 l2.5,-2.6" fill="none" stroke="#333" stroke-width="1.1" stroke-linecap="round" stroke-linejoin="round"/>
<path d="M683.1999999999999,105.2 l2.4,2.7 l4.3,-5.6" fill="none" stroke="#2b62ad" stroke-width="1.3" stroke-linecap="round" stroke-linejoin="round"/>
<path d="M683.1999999999999,117.60000000000001 l2.4,2.7 l4.3,-5.6" fill="none" stroke="#2b62ad" stroke-width="1.3" stroke-linecap="round" stroke-linejoin="round"/>
<path d="M683.1999999999999,130.0 l2.4,2.7 l4.3,-5.6" fill="none" stroke="#2b62ad" stroke-width="1.3" stroke-linecap="round" stroke-linejoin="round"/>
<path d="M683.1999999999999,142.4 l2.4,2.7 l4.3,-5.6" fill="none" stroke="#2b62ad" stroke-width="1.3" stroke-linecap="round" stroke-linejoin="round"/>
<path d="M733.600,149.300 l3.300,3 l3.300,-3" fill="none" stroke="#2b62ad" stroke-width="1.3" stroke-linecap="round" stroke-linejoin="round"/>
<path d="M118.8,179.3 v-6.300 m-2.700,2.800 l2.700,-2.900 l2.700,2.900" fill="none" stroke="#45ad80" stroke-width="1.3"/>
<path d="M157.2,179.3 v-6.300 m-2.700,2.800 l2.700,-2.900 l2.700,2.900" fill="none" stroke="#45ad80" stroke-width="1.3"/>
<path d="M195,179.3 v-6.300 m-2.700,2.800 l2.700,-2.900 l2.700,2.900" fill="none" stroke="#45ad80" stroke-width="1.3"/>
<path d="M763.300,165.300 l-3.500,4 l3.500,4" fill="none" stroke="#2b6cb8" stroke-width="1.100" stroke-linecap="round" stroke-linejoin="round"/>
<rect x="1" y="183.700" width="766" height="1.800" fill="#1b80c9"/><rect x="1" y="199.800" width="766" height="2.100" fill="#1b80c9"/>
<rect x="79.150" y="184.700" width="45.500" height="15.700" fill="none" stroke="#177cc4" stroke-width="2.700"/>
<g><path d="M365.600,186.700 h6.300 l3.500,3.500 v9 h-9.800 z" fill="#fff" stroke="#606060" stroke-width="1"/><path d="M371.900,186.700 v3.500 h3.500" fill="none" stroke="#606060" stroke-width=".9"/><path d="M367.600,189.600 h2.400 M367.300,191.100 h5.200" stroke="#8d8d8d" stroke-width=".8"/><rect x="366.200" y="192.300" width="8.600" height="3.100" fill="#2d62b5"/><rect x="366.200" y="195.400" width="8.600" height="3.400" fill="#e4ecf8"/><path d="M366.700,195.400 v3.400 M370.500,195.400 v3.400 M374.300,195.400 v3.400" stroke="#3a6cbb" stroke-width="1"/></g>
<path d="M8.800,255 l-3.600,3.300 l3.600,3.300" fill="none" stroke="#bdbdbd" stroke-width="1"/>
<path d="M759.500,255 l3.600,3.300 l-3.600,3.300" fill="none" stroke="#cfcfcf" stroke-width="1"/>
<path d="M379,265.500 h10" stroke="#ececec" stroke-width="1" stroke-dasharray="1.500,0.700"/>
<g><path d="M7,274 v10.500 h11.500" fill="none" stroke="#4a7ac0" stroke-width="1.2"/><rect x="7.200" y="280" width="4.600" height="4.600" fill="#3b6db8"/><rect x="13" y="282.300" width="2.200" height="2.200" fill="#b5b5b5"/><rect x="16" y="282.300" width="2.200" height="2.200" fill="#b5b5b5"/><path d="M11.500,280.300 h7" stroke="#9dbce4" stroke-width="1"/><circle cx="14.300" cy="275.800" r="2.900" fill="#fff" stroke="#4a7ac0" stroke-width="1.100"/><path d="M16.300,278 l2.300,2.500" stroke="#4a7ac0" stroke-width="1.500"/></g>
<path d="M23.6,276.4 l3.0,3.1 l3.0,-3.1" fill="none" stroke="#222" stroke-width="1.3" stroke-linecap="round" stroke-linejoin="round"/>
<g transform="translate(5.6,295.4)"><rect x="2.700" y="0.600" width="8.800" height="6" rx="2" fill="#fff" stroke="#7b8088" stroke-width="1"/><rect x="3.500" y="2.300" width="7.200" height="3.700" fill="#3f6fb7"/><rect x="3.500" y="3.600" width="7.200" height="0.900" fill="#5d8bd0"/><rect x="0.300" y="4.800" width="13.800" height="6" rx="1.800" fill="#6a7078"/><rect x="3.800" y="8.300" width="6.800" height="5" rx="0.600" fill="#fff" stroke="#7b8088" stroke-width="0.900"/><rect x="5" y="10" width="4.400" height="2.200" fill="#a9c6ee"/></g>
<path d="M26.7,301.4 l2.5,2.3 l2.5,-2.3" fill="none" stroke="#2f5ea0" stroke-width="1.15" stroke-linecap="round" stroke-linejoin="round"/>
<g transform="translate(611,295.8)"><path d="M0.5,0 V13 H14" fill="none" stroke="#9a9a9a" stroke-width="1"/><rect x="2" y="6" width="3.4" height="6.5" fill="#5cb85c"/><rect x="5.9" y="0.8" width="3.9" height="11.7" fill="#f7bf12"/><rect x="10.2" y="3.6" width="3.4" height="8.9" fill="#7b52c7"/></g>
<path d="M630.2,301.4 l2.5,2.3 l2.5,-2.3" fill="none" stroke="#2f5ea0" stroke-width="1.15" stroke-linecap="round" stroke-linejoin="round"/>
<g><rect x="644.500" y="296" width="12.500" height="10" rx="1" fill="#fff" stroke="#707070"/><rect x="644" y="295.500" width="13.500" height="2.300" fill="#4a7fd0"/><rect x="645" y="297.800" width="11.500" height="1" fill="#b9d2f2"/><rect x="650" y="300" width="8.500" height="9" fill="#fff"/><circle cx="654.800" cy="304.300" r="2.800" fill="#fff" stroke="#3a6fb5" stroke-width="1.200"/><path d="M652.800,306.500 l-2.300,2.400" stroke="#3a6fb5" stroke-width="1.500" stroke-linecap="round"/></g>
<g transform="translate(714.9,302.1) scale(1.038)"><path d="M5.3,-0.8 A5.3,5.3 0 0 0 -4.3,-3.100 M-5.3,0.8 A5.3,5.3 0 0 0 4.3,3.100" fill="none" stroke="#2fa36d" stroke-width="2.22"/><path d="M-7,-7 V-2 H-2 Z M7,7 V2 H2 Z" fill="#2fa36d"/></g>
<g transform="translate(745.8,295.5)" fill="none" stroke="#3a6cb4"><circle cx="4.3" cy="4.9" r="3.800" stroke-width="1"/><path d="M7.200,8.300 L10.300,12" stroke-width="2.200" stroke-linecap="round"/><path d="M10.500,1.800 h2.600 M11.100,3.400 h2.800 M11.500,5 h3" stroke-width="0.9" stroke="#5f8ccc"/></g>
<path d="M733.600,311.600 l3.300,3 l3.300,-3" fill="none" stroke="#2b62ad" stroke-width="1.3" stroke-linecap="round" stroke-linejoin="round"/>
<path d="M46.200,327.300 v-6.500 m-3.200,3.200 l3.200,-3.300 l3.200,3.300" fill="none" stroke="#3aa873" stroke-width="1.300"/>
<path d="M763.300,326.300 l-3.500,4.200 l3.500,4.200" fill="none" stroke="#2b6cb8" stroke-width="1.100" stroke-linecap="round" stroke-linejoin="round"/>
<rect x="25.600" y="346.600" width="25.900" height="14.900" fill="none" stroke="#147ac1" stroke-width="2.800"/>
<path d="M8.800,473 l-3.600,3.300 l3.600,3.300" fill="none" stroke="#bdbdbd" stroke-width="1"/>
<path d="M760,473.200 l3.400,2.900 l-3.400,2.900" fill="none" stroke="#c2c2c2" stroke-width="1"/>
</svg>
</div>
</body>
</html>
